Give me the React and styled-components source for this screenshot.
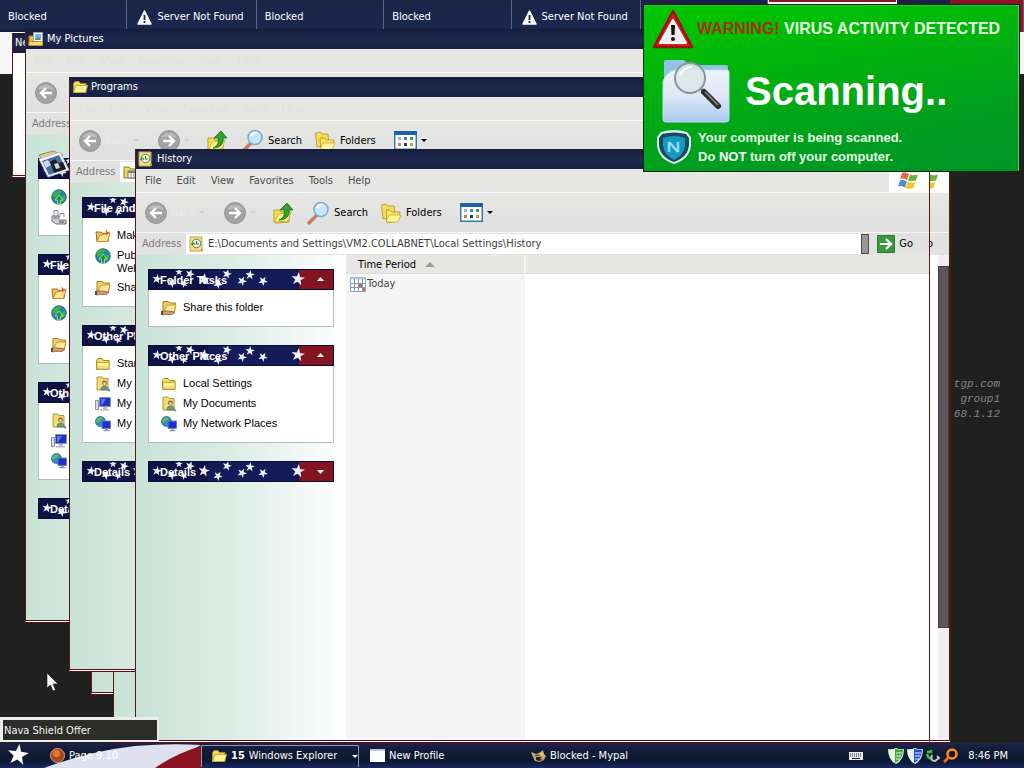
import React, { useId } from "react";
import styled, { createGlobalStyle } from "styled-components";

const ui = `"DejaVu Sans Condensed", "DejaVu Sans", sans-serif`;
const arial = `"Liberation Sans", Arial, sans-serif`;

const GlobalStyle = createGlobalStyle`
  * { box-sizing: border-box; }
  body { margin: 0; background: #202020; font: 11px/14px ${ui}; }
  button, input { font: inherit; color: inherit; border: 0; padding: 0; margin: 0; background: none; }
  svg { display: block; flex: none; }
`;

/* ---------- desktop ---------- */
const Desktop = styled.main`
  position: relative;
  display: flex;
  flex-direction: column;
  height: 100vh;
  overflow: hidden;
  background: #202020;
`;
const TabStrip = styled.nav`
  display: flex;
  flex: none;
  height: 32px;
  background: linear-gradient(#1a2246, #1d284f 85%, #141a38);
`;
const Tab = styled.button`
  flex: 1 1 0;
  display: flex;
  align-items: center;
  gap: 5px;
  height: 100%;
  padding: 2px 8px 0;
  color: #fff;
  white-space: nowrap;
  border-right: 1px solid #5c6486;
  ${(p) => p.$icon && "padding-left: 10px;"}
  ${(p) => p.$red && "background: linear-gradient(90deg, #1a2246 42%, #8c1420 42%);"}
  ${(p) => p.$active && "background: #8c1420; border: solid #fff; border-width: 0 1px 30px;"}
`;
const PageBand = styled.div`
  flex: none;
  height: 42px;
  background: #f6f6f6;
`;
const HostInfo = styled.div`
  position: absolute;
  top: 377px;
  right: 24px;
  color: #85857f;
  font: italic 11px/15px "Liberation Mono", monospace;
  text-align: right;
`;
const Pointer = styled.div`
  position: absolute;
  left: 46px;
  bottom: 76px;
`;

/* ---------- explorer windows ---------- */
const Frame = styled.section`
  position: absolute;
  left: ${(p) => p.$l}px;
  top: ${(p) => p.$t}px;
  right: ${(p) => p.$r}px;
  bottom: ${(p) => p.$b}px;
  display: flex;
  flex-direction: column;
  overflow: hidden;
  background: #fff;
  border: 1px solid #5c1616;
  border-top: 0;
  border-bottom: 3px double #5e0d14;
`;
const SideFrame = styled(Frame)`
  border-right: 2px solid #43200f;
`;
const TitleBar = styled.header`
  flex: none;
  display: flex;
  align-items: center;
  gap: 3px;
  height: 20px;
  padding-left: 2px;
  color: #fff;
  background: linear-gradient(#161d3d, #202a50 50%, #171f41);
`;
const Title = styled.h2`
  margin: 0;
  font: 11px/14px ${ui};
`;
const MenuBar = styled.div`
  flex: none;
  display: flex;
  align-items: center;
  gap: 15px;
  height: 24px;
  padding-left: 9px;
  color: ${(p) => (p.$faded ? "#e1e1e0" : "#4a4a4a")};
  background: #e6e6e5;
  border-bottom: 1px solid #fafafa;
`;
const LogoBox = styled.div`
  align-self: stretch;
  display: flex;
  align-items: center;
  justify-content: center;
  width: 40px;
  margin-left: auto;
  background: #fff;
`;
const ToolBar = styled.div`
  flex: none;
  display: flex;
  align-items: center;
  height: 40px;
  padding-left: 9px;
  background: linear-gradient(#e7e7e6, #dfdfdf);
  border-bottom: 1px solid #f8f8f8;
`;
const ToolButton = styled.button`
  display: flex;
  align-items: center;
  gap: 4px;
  margin-right: ${(p) => p.$gap || 0}px;
  color: ${(p) => (p.$faded ? "#ebebeb" : "#000")};
`;
const AddressBar = styled.div`
  flex: none;
  display: flex;
  align-items: center;
  height: 22px;
  padding: 0 16px 0 6px;
  background: #e2e2e1;
`;
const AddressLabel = styled.label`
  width: 44px;
  color: #7c7c7c;
`;
const AddressBox = styled.div`
  flex: 1;
  display: flex;
  align-items: center;
  gap: 3px;
  height: 20px;
  padding-left: 3px;
  background: #fff;
`;
const AddressInput = styled.input`
  flex: 1;
  min-width: 0;
  color: #3c3c3c;
`;
const DropButton = styled.button`
  width: 8px;
  height: 20px;
  background: #969696;
  border: 1px solid #4e4e4e;
`;
const GoButton = styled.button`
  display: flex;
  align-items: center;
  gap: 4px;
  margin-left: 8px;
`;
const Body = styled.div`
  flex: 1;
  display: flex;
  min-height: 0;
`;
const TaskPane = styled.aside`
  flex: none;
  display: flex;
  flex-direction: column;
  gap: 18px;
  width: 210px;
  padding: ${(p) => p.$top || 14}px 12px;
  font-family: ${arial};
  background: linear-gradient(90deg, #c9e2d8, #dcece5 45%, #fff);
`;
const GroupHead = styled.button`
  position: relative;
  display: block;
  width: 100%;
  height: 21px;
  padding-left: 12px;
  color: #fff;
  font-weight: bold;
  text-align: left;
`;
const HeadArt = styled.svg`
  position: absolute;
  inset: 0;
`;
const HeadText = styled.span`
  position: relative;
`;
const PictureBadge = styled.div`
  position: absolute;
  left: 0;
  bottom: 0;
`;
const GroupBody = styled.ul`
  margin: 0;
  padding: 8px 12px 8px 12px;
  list-style: none;
  background: #fff;
  border: solid #b5bdb9;
  border-width: 0 1px 1px;
`;
const TaskItem = styled.li`
  display: flex;
  gap: 6px;
  min-height: 20px;
  padding: 2px 0;
  line-height: 13px;
`;
const TaskLink = styled.a`
  padding: 1px 0;
  color: #000;
  text-decoration: none;
`;
const ListTable = styled.table`
  flex: 1;
  align-self: stretch;
  height: 100%;
  border-collapse: collapse;
  th { height: 18px; padding: 2px 0 0 12px; font-weight: normal; text-align: left; background: #e7e7e6; border-bottom: 1px solid #dcdcdc; }
  th:first-child { width: 179px; border-right: 2px solid #f4f4f4; }
  td { padding: 2px 4px; vertical-align: top; color: #444; }
  td:first-child { background: #f4f4f4; }
`;
const Inline = styled.span`
  display: flex;
  align-items: center;
  gap: ${(p) => p.$gap}px;
`;
const Scroll = styled.div`
  display: flex;
  flex-direction: column;
  width: 11px;
  margin-left: auto;
  padding: 11px 0 112px;
  background: #f0eef0;
`;
const Thumb = styled.div`
  flex: 1;
  background: #59575a;
  border: 1px solid #3f3d40;
`;

/* ---------- warning banner ---------- */
const Banner = styled.section`
  position: absolute;
  top: 4px;
  right: 4px;
  display: flex;
  flex-direction: column;
  width: 377px;
  height: 168px;
  padding: 2px 8px;
  color: #e4ffe0;
  font: bold 13px/19px ${arial};
  background: linear-gradient(170deg, #00c800, #00b40c 35%, #009a24 80%, #009626);
  border: 1px solid #06280a;
  box-shadow: inset -1px 0 #5ccc62, inset 0 1px #2fbf3a;
`;
const BannerRow = styled.div`
  display: flex;
  align-items: center;
  gap: ${(p) => p.$gap}px;
  padding-left: ${(p) => p.$pad || 0}px;
  height: ${(p) => p.$h}px;
`;
const BannerTitle = styled.h1`
  margin: 0;
  font: bold 16px/20px ${arial};
  white-space: nowrap;
`;
const Alert = styled.span`
  color: #a03400;
`;
const Scanning = styled.strong`
  color: #fff;
  font: bold 40px/48px ${arial};
`;
const BannerText = styled.p`
  margin: 0;
`;
const Strong = styled.b`
  font-weight: 900;
  color: #fff;
`;

/* ---------- taskbar ---------- */
const Tooltip = styled.div`
  position: absolute;
  left: 0;
  bottom: 26px;
  width: 159px;
  padding: 4px 1px 2px;
  color: #f4f4f4;
  background: #2c2c29;
  border: 3px solid #ececec;
  border-width: 3px 2px 2px 3px;
`;
const Taskbar = styled.footer`
  position: relative;
  display: flex;
  align-items: center;
  flex: none;
  height: 25px;
  margin-top: auto;
  color: #fff;
  background: linear-gradient(#1c2448, #121c38 30%, #0c1830 70%, #1b2a62);
`;
const StartArea = styled.div`
  position: relative;
  display: flex;
  align-items: center;
  width: 201px;
  height: 100%;
  padding-left: 50px;
`;
const FlagArt = styled.svg`
  position: absolute;
  inset: 0;
`;
const StartItem = styled.button`
  position: relative;
  display: flex;
  align-items: center;
  gap: 4px;
`;
const TaskButton = styled.button`
  display: flex;
  align-items: center;
  gap: 4px;
  width: ${(p) => p.$w}px;
  height: 22px;
  padding-left: ${(p) => (p.$group ? 9 : 11)}px;
  ${(p) => p.$group && "border: solid #8d93ad; border-width: 1px 1px 0;"}
`;
const Push = styled.span`
  margin-left: auto;
`;
const Tray = styled.div`
  display: flex;
  align-items: center;
  gap: 3px;
  margin-left: auto;
  padding-right: 16px;
`;
const Clock = styled.time`
  margin-left: 7px;
`;
const KeyboardSlot = styled.span`
  margin-right: 22px;
`;

/* ---------- icons ---------- */
const starPoints = (cx, cy, r, turn = 0) =>
  Array.from({ length: 10 }, (_, i) => {
    const a = ((i * 36 - 90 + turn) * Math.PI) / 180;
    const d = i % 2 ? r * 0.4 : r;
    return `${(cx + d * Math.cos(a)).toFixed(1)},${(cy + d * Math.sin(a)).toFixed(1)}`;
  }).join(" ");

const stars = [
  [9, 10, 5, 10], [24, 14, 5, 30], [31, 3, 4, 0], [36, 15, 4, 50], [42, 5, 5, 20],
  [56, 10, 6, 10], [70, 15, 5, 30], [79, 5, 5, 15], [94, 12, 5, 25], [102, 6, 5, 5],
  [115, 12, 5, 30], [150, 10, 7, 8],
];

const Folder = ({ open }) => (
  <svg width="16" height="16" viewBox="0 0 16 16">
    <path d="M1.500 4.500 3 2.500h4l1.500 2h5.500v9H1.500z" fill="#f1dc62" stroke="#a68a24" />
    <path d={open ? "M1.500 13.500 4 6.500h11.500l-2 7z" : "M2 6.500h12v6.500H2z"} fill="#fff29a" stroke="#c7a934" />
    {!open && <path d="M3 11h10" stroke="#e8cf52" />}
  </svg>
);
const NewFolder = () => (
  <svg width="16" height="16" viewBox="0 0 16 16">
    <path d="M1 4h5l2 1.500h6l-1 8H2z" fill="#efc75a" stroke="#986a1e" />
    <path d="M2 13.500 5 7l10-2-2.500 8.500z" fill="#ffe58c" stroke="#c08b2a" />
    <path d="m11 1 1 2.500 3 .5-2.500 1.500L12 8l-1.500-2.500z" fill="#e05a28" />
  </svg>
);
const ShareFolder = () => (
  <svg width="16" height="16" viewBox="0 0 16 16">
    <path d="M2 1.500h5l2 1.500h5.500l-1 9H2z" fill="#f3cf62" stroke="#a87e28" />
    <path d="m3 11 3-6h9l-2 7z" fill="#ffe99c" stroke="#c8983a" />
    <path d="M1 11h5l5 .5 3 1-3 2H5l-4 .5z" fill="#d99a6a" stroke="#8f5b32" strokeWidth=".7" />
    <path d="M0 11h2v4H0z" fill="#5a4a44" />
  </svg>
);
const Globe = () => (
  <svg width="16" height="16" viewBox="0 0 16 16">
    <circle cx="8" cy="8" r="7.300" fill="#2482ae" stroke="#1c5a70" strokeWidth=".8" />
    <path d="M3 3c3-2 6-2 8 0l-3 2-2 3-4 1C1 6 2 4 3 3zM9 8l5-2c1 3 0 5-2 7l-3-2z" fill="#34b04c" />
    <path d="m8 6 4 5H9.500v4h-3v-4H4z" fill="#1f8f38" stroke="#c2f0c0" strokeWidth=".7" />
  </svg>
);
const UserDocs = () => (
  <svg width="16" height="16" viewBox="0 0 16 16">
    <path d="M2 1h5l1 1.500h5V14H2z" fill="#f0dc74" stroke="#b29a3c" />
    <circle cx="9.500" cy="7" r="2.400" fill="#8a6748" />
    <circle cx="9.500" cy="7.600" r="1.500" fill="#f1c49c" />
    <path d="M6 14c0-3 1.500-4 3.500-4s3.500 1 4.500 4z" fill="#6b9a78" stroke="#40704e" strokeWidth=".6" />
    <path d="m12 13 3 2" stroke="#6d8db0" strokeWidth="2" />
  </svg>
);
const Computer = () => (
  <svg width="16" height="16" viewBox="0 0 16 16">
    <path d="M.5 4.500h3v9h-3z" fill="#dcdce0" stroke="#777" strokeWidth=".8" />
    <path d="M4.500 1.500h11v9h-11z" fill="#1f35c2" stroke="#8c92b0" />
    <path d="M6 3h5L7 9H6z" fill="#5878f2" />
    <path d="M8 11h4v2h2v1.500H5V13h3z" fill="#b9bcc8" />
  </svg>
);
const Network = () => (
  <svg width="16" height="16" viewBox="0 0 16 16">
    <circle cx="5.500" cy="5.500" r="5" fill="#3088c6" stroke="#1a5a88" strokeWidth=".7" />
    <path d="M2 2.500c2-1.500 5-1.500 6 0L5 5 2 7C1 5 1 4 2 2.500z" fill="#4fc45c" />
    <path d="M7 5h8.500v7.500H7z" fill="#1c2fcf" stroke="#6f80b6" />
    <path d="M10 12.500h3V14h1.500v1.300h-6V14H10z" fill="#8e99b8" />
  </svg>
);
const History = () => (
  <svg width="16" height="16" viewBox="0 0 16 16">
    <path d="M1 1h12v14H1z" fill="#f4df82" stroke="#c4a648" />
    <circle cx="7.500" cy="7.500" r="4.300" fill="#eef6ea" stroke="#667a4c" />
    <path d="M7.500 5v3h2.500M4 7l-1.500 2M4 7l2 1.500" fill="none" stroke="#3a7a34" strokeWidth="1.200" />
    <path d="M12 13h2v2h-2z" fill="#c49d30" />
  </svg>
);
const PicturesFolder = () => (
  <svg width="16" height="16" viewBox="0 0 16 16">
    <path d="M1 5h4l1 1h8v8.500H1z" fill="#f0b84a" stroke="#b3781c" />
    <path d="M5.500 1.500h9v9h-9z" fill="#fff" stroke="#8aa6c4" />
    <path d="M7 3h6v6H7z" fill="#79b6ea" />
    <path d="m7 9 3-3 3 3z" fill="#5f8a5a" />
    <path d="M1 10.500h13.500v4H1z" fill="#ffd679" stroke="#c98f2c" />
  </svg>
);
const ProgramsFolder = () => (
  <svg width="16" height="16" viewBox="0 0 16 16">
    <path d="M1 3h5l2 2h7v9H1z" fill="#e9d967" stroke="#8d7d20" />
    <path d="M5 7h10v7H5z" fill="#fff" stroke="#777" />
    <path d="M5 7h10v2H5z" fill="#6d8a54" /><path d="M8 9v5m3-5v5" stroke="#888" />
  </svg>
);
const Printer = () => (
  <svg width="16" height="16" viewBox="0 0 16 16">
    <path d="M3 7V1.500h4V7M9 8V4.500h4V8" fill="#fff" stroke="#888" />
    <path d="M1 7h7v4h7v4H5l-4-3z" fill="#c9ccd0" stroke="#6e7378" />
    <path d="M3 9h3m2 4h5" stroke="#4e5358" />
  </svg>
);
const Arrow = ({ flip }) => (
  <svg width="22" height="22" viewBox="0 0 22 22">
    <circle cx="11" cy="11" r="10.500" fill="#a3a3a3" stroke="#959595" />
    <path d="M3 8a9 9 0 0 1 16 0c-5-2-11-2-16 0z" fill="#bcbcbc" />
    <path d={flip ? "M5 11h11M11 6l5 5-5 5" : "M17 11H6m5-5-5 5 5 5"} fill="none" stroke="#fff" strokeWidth="2.400" />
  </svg>
);
const UpFolder = () => (
  <svg width="22" height="22" viewBox="0 0 22 22">
    <path d="M2 8h5l2 2h8v10l-13 1-2-1z" fill="#f2e24e" stroke="#b49c24" />
    <path d="m3 20 3-8 13-2-3 9z" fill="#fff382" stroke="#d0b636" />
    <path d="M7 18c5-2 6-6 5-10H8l7-7 6 7h-4c1 6-3 10-10 10z" fill="#2ea32e" stroke="#166a1a" strokeWidth=".8" />
  </svg>
);
const SearchIcon = () => (
  <svg width="24" height="24" viewBox="0 0 24 24">
    <path d="m11 14-8 8" stroke="#c67b66" strokeWidth="3.500" strokeLinecap="round" />
    <circle cx="15" cy="8.500" r="7" fill="#c5e8fa" stroke="#7fa8cc" strokeWidth="1.500" />
    <path d="M11 7c1-3 4-4 6-3" fill="none" stroke="#fff" strokeWidth="2" />
  </svg>
);
const FoldersIcon = () => (
  <svg width="22" height="22" viewBox="0 0 22 22">
    <path d="M1.500 3 6 2l2 2h6l1 11-12 2z" fill="#f4de5a" stroke="#c5a12e" />
    <path d="M6 8h4l2 2h8l-2 9-11 2z" fill="#f7e56a" stroke="#c5a12e" />
    <path d="m6 20 3-7h12l-3 7z" fill="#fff59c" stroke="#d8b83e" />
  </svg>
);
const ViewsIcon = () => (
  <svg width="23" height="19" viewBox="0 0 23 19">
    <path d="M.75.75h21.500v17.500H.75z" fill="#fff" stroke="#3a79ae" strokeWidth="1.500" />
    <path d="M0 0h23v4H0z" fill="#1c62a4" />
    <path d="M4 6h3v3H4z" fill="#b4a3b8" /><path d="M10 6h3v3h-3z" fill="#4a7cc4" /><path d="M16 6h3v3h-3z" fill="#3f9a58" />
    <path d="M4 12h3v3H4z" fill="#cc7c50" /><path d="M10 12h3v3h-3z" fill="#183c8c" /><path d="M16 12h3v3h-3z" fill="#b4a54a" />
  </svg>
);
const Caret = ({ color = "#000", up, big }) => (
  <svg width={big ? 10 : 6} height={big ? 5 : 3} viewBox="0 0 6 3">
    <path d={up ? "M0 3h6L3 0z" : "M0 0h6L3 3z"} fill={color} />
  </svg>
);
const WinLogo = () => (
  <svg width="22" height="20" viewBox="0 0 22 20">
    <path d="M4 2c3-1 5 0 7 1l-2 6c-2-1-4-2-7-1z" fill="#e86a3c" />
    <path d="M12 3.500c3 1 5 1 8 0l-2 6c-3 1-5 1-8 0z" fill="#6fb43a" />
    <path d="M2 9.500c3-1 5 0 7 1l-2 6c-2-1-4-2-7-1z" fill="#4a90d8" />
    <path d="M9.500 11c3 1 5 1 8 0l-2 6c-3 1-5 1-8 0z" fill="#f4c62c" />
  </svg>
);
const GoIcon = () => (
  <svg width="18" height="18" viewBox="0 0 18 18">
    <path d="M.5.5h17v17H.5z" fill="#3a9a3c" stroke="#2a7c30" />
    <path d="M3 9h11M9 4l5 5-5 5" fill="none" stroke="#fff" strokeWidth="2.200" />
  </svg>
);
const Calendar = () => (
  <svg width="16" height="16" viewBox="0 0 16 16">
    <path d="M.5 1.500h15v14H.5z" fill="#fff" stroke="#8aa4c4" />
    <path d="M.5 1.500h15v2H.5z" fill="#b4c6dc" />
    <path d="M4.500 3v12m4-12v12m4-12v12M1 7.500h14M1 11.500h14" stroke="#7c9abf" />
    <path d="M9 8h3v3H9zM13 12h2v3h-2z" fill="#d8623e" />
  </svg>
);
const PhotoStack = () => (
  <svg width="31" height="30" viewBox="0 0 31 30">
    <path d="m1 6 14-4 10 4-18 8z" fill="#d8d08c" stroke="#8e8e62" />
    <path d="m1 10 21-7 9 18-21 7z" fill="#f4f6fa" stroke="#b6bcc8" />
    <path d="m4 12 17-6 7 14-17 6z" fill="#4c6ea4" />
    <path d="m12 13 5-3 3 4 5-1 3 7-12 4z" fill="#1c222c" />
    <path d="m5 13 5-2 3 5-5 3zM16 15l4-1 2 5-4 1z" fill="#c9d8ec" />
  </svg>
);
const WarnGlyph = () => (
  <svg width="15" height="15" viewBox="0 0 15 15">
    <path d="M7.500 1 14 14H1z" fill="#fff" stroke="#fff" strokeWidth="1.500" strokeLinejoin="round" />
    <path d="M7.500 5v5M7.500 11v2" stroke="#1c2448" strokeWidth="1.800" />
  </svg>
);
const WarnSign = () => (
  <svg width="42" height="42" viewBox="0 0 42 42">
    <path d="M21 3 40 39H2z" fill="#d8201c" stroke="#a01010" strokeWidth="2.500" strokeLinejoin="round" />
    <path d="M21 12 34 35H8z" fill="#ececec" stroke="#fff" strokeWidth="2" strokeLinejoin="round" />
    <path d="M19 17h4l-.5 10h-3z" fill="#111" /><circle cx="21" cy="31" r="2" fill="#111" />
  </svg>
);
const ScanFolder = () => (
  <svg width="68" height="64" viewBox="0 0 68 64">
    <defs>
      <linearGradient id="scan-front" x1="0" y1="0" x2="0" y2="1">
        <stop offset="0" stopColor="#eef3fb" /><stop offset=".5" stopColor="#dfe8f8" /><stop offset="1" stopColor="#a9c8ee" />
      </linearGradient>
    </defs>
    <path d="M2 3q0-2 2-2h18l5 5h37q2 0 2 2v20H2z" fill="#90c4e0" />
    <path d="M1 22q4-9 12-11h52q2 0 2 2v47q0 3-3 3H4q-3 0-3-3z" fill="url(#scan-front)" stroke="#c4daf4" />
    <circle cx="28" cy="19" r="15" fill="#d9e6ea" fillOpacity=".8" stroke="#8d9494" strokeWidth="2" />
    <path d="M18 16q3-8 12-8" fill="none" stroke="#fff" strokeWidth="2" />
    <path d="m39 30 4 4" stroke="#8a8a8a" strokeWidth="3" />
    <path d="m42 33 14 14" stroke="#2e2e2e" strokeWidth="6" strokeLinecap="round" />
    <path d="m43 33 13 13" stroke="#8a8a8a" strokeWidth="1.500" />
  </svg>
);
const NavaShield = () => (
  <svg width="36" height="36" viewBox="0 0 36 36">
    <path d="M5 3q13-4 26 0l4 5v8q-1 14-17 19Q2 30 1 16V8z" fill="#dfeef0" />
    <path d="M6 5q12-3 24 0l3 4v7q-1 12-15 17Q4 28 3 16V9z" fill="#164d5c" />
    <path d="M7 9q11-4 22 0v8q-1 9-11 14Q8 26 7 17z" fill="#1599c0" />
    <path d="M13 23V13m0 0 9 10m0 0V13" fill="none" stroke="#8fe0f2" strokeWidth="2.500" />
  </svg>
);
const Ball = () => (
  <svg width="15" height="15" viewBox="0 0 15 15">
    <circle cx="7.500" cy="7.500" r="7" fill="#a8461a" stroke="#e0a078" />
    <circle cx="6.500" cy="5.500" r="3.500" fill="#e07a34" />
  </svg>
);
const BlankPage = () => (
  <svg width="15" height="13" viewBox="0 0 15 13">
    <path d="M0 0h15v13H0z" fill="#fff" /><path d="M0 0h15v2H0z" fill="#b9c8e4" />
  </svg>
);
const MypalIcon = () => (
  <svg width="15" height="14" viewBox="0 0 15 14">
    <path d="m0 3 5 2 3-1 4-3 1 4 2 2-2 4-4 2-5-1-2-4z" fill="#c2a878" />
    <path d="M5 8h6l-2 2 3 1-4 1-3-1z" fill="#2c2418" /><circle cx="11" cy="5" r="1.500" fill="#f0d040" />
    <path d="m4 7 3-1 2 1" fill="none" stroke="#2c2418" />
  </svg>
);
const Keyboard = () => (
  <svg width="14" height="9" viewBox="0 0 14 9">
    <path d="M0 1h14v8H0z" fill="#e8e8e8" />
    <path d="M1 3h12M1 5h12" stroke="#222" strokeDasharray="1 1" /><path d="M3 7.500h8" stroke="#222" />
  </svg>
);
const TrayShield = ({ color }) => (
  <svg width="16" height="16" viewBox="0 0 16 16">
    <path d="M0 1q4 1 8-1 4 2 8 1 0 11-8 15Q0 12 0 1z" fill="#e9f6e6" />
    <path d="M7 1q5 1 8 1 0 9-8 13z" fill={color} />
    <path d="M8 5h6M8 8h5M8 11h4" stroke="#e9f6e6" />
  </svg>
);
const Plug = () => (
  <svg width="14" height="14" viewBox="0 0 14 14">
    <path d="M1 3h4V1M1 5q1 5 5 4" fill="none" stroke="#35c43a" strokeWidth="2.500" />
    <path d="M6 6q-2 6 3 6l4-3-2-2" fill="none" stroke="#c2c6c2" strokeWidth="2" />
  </svg>
);
const OrangeLens = () => (
  <svg width="15" height="15" viewBox="0 0 15 15">
    <circle cx="9" cy="6" r="4.500" fill="none" stroke="#ff8a1c" strokeWidth="2.600" />
    <path d="m6 9-5 5" stroke="#f07010" strokeWidth="2.800" />
  </svg>
);

/* ---------- parts ---------- */
const icons = {
  share: ShareFolder, make: NewFolder, web: Globe, folder: Folder,
  docs: UserDocs, computer: Computer, network: Network, printer: Printer,
};

function TaskGroup({ title, items, collapsed, badge }) {
  return (
    <div>
      <GroupHead aria-label={title}>
        <HeadArt width="100%" height="21" viewBox="0 0 186 21">
          <path d="M0 0h186v21H0z" fill="#0e1244" />
          <path d="M60 0h90v21H60z" fill="#141b58" />
          <path d="M151 0h35v21h-35z" fill="#82151f" />
          {stars.map(([x, y, r, t]) => (
            <polygon key={x} points={starPoints(x, y, r, t)} fill="#eef0fa" />
          ))}
          <path d={collapsed ? "M169 9h7l-3.500 4z" : "M169 12h7l-3.500-4z"} fill="#fff" />
          <path d="M.5.5h185v20H.5z" fill="none" stroke="#0a0d33" />
        </HeadArt>
        {badge ? <PictureBadge><PhotoStack /></PictureBadge> : <HeadText>{title}</HeadText>}
      </GroupHead>
      {!collapsed && (
        <GroupBody>
          {items.map(([icon, label]) => {
            const Icon = icons[icon];
            return (
              <TaskItem key={label}>
                <Icon />
                <TaskLink href="#">{label}</TaskLink>
              </TaskItem>
            );
          })}
        </GroupBody>
      )}
    </div>
  );
}

const menus = ["File", "Edit", "View", "Favorites", "Tools", "Help"];

function Explorer({ title, icon: Icon, path, addressIcon: AddressIcon, box, faded, groups, paneTop, frame: Shell = Frame, children }) {
  const id = useId();
  const [l, t, r, b] = box;
  return (
    <Shell $l={l} $t={t} $r={r} $b={b}>
      <TitleBar><Icon open /><Title>{title}</Title></TitleBar>
      <MenuBar $faded={faded}>
        {menus.map((m) => <button key={m}>{m}</button>)}
        <LogoBox><WinLogo /></LogoBox>
      </MenuBar>
      <ToolBar>
        <ToolButton $faded $gap={19}><Arrow />Back<Caret color="#cfcfcf" /></ToolButton>
        <ToolButton $faded $gap={16}><Arrow flip /><Caret color="#cfcfcf" /></ToolButton>
        <ToolButton aria-label="Up" $gap={12}><UpFolder /></ToolButton>
        <ToolButton $gap={12}><SearchIcon />Search</ToolButton>
        <ToolButton $gap={18}><FoldersIcon />Folders</ToolButton>
        <ToolButton aria-label="Views"><ViewsIcon /><Caret /></ToolButton>
      </ToolBar>
      <AddressBar>
        <AddressLabel htmlFor={id}>Address</AddressLabel>
        <AddressBox>
          <AddressIcon />
          <AddressInput id={id} defaultValue={path} />
        </AddressBox>
        <DropButton aria-label="Show addresses" />
        <GoButton><GoIcon />Go</GoButton>
      </AddressBar>
      <Body>
        <TaskPane $top={paneTop}>
          {groups.map((g) => <TaskGroup key={g.title} {...g} />)}
        </TaskPane>
        {children}
      </Body>
    </Shell>
  );
}

const details = { title: "Details", collapsed: true };
const fileTasks = {
  title: "File and Folder Tasks",
  items: [["make", "Make a new folder"], ["web", "Publish this folder to the Web"], ["share", "Share this folder"]],
};
const pictureGroups = [
  { title: "Picture Tasks", badge: true, items: [["web", "Order prints online"], ["printer", "Print pictures"]] },
  fileTasks,
  { title: "Other Places", items: [["docs", "My Documents"], ["computer", "My Computer"], ["network", "My Network Places"]] },
  details,
];
const programGroups = [
  fileTasks,
  { title: "Other Places", items: [["folder", "Start Menu"], ["docs", "My Documents"], ["computer", "My Computer"], ["network", "My Network Places"]] },
  details,
];
const historyGroups = [
  { title: "Folder Tasks", items: [["share", "Share this folder"]] },
  { title: "Other Places", items: [["folder", "Local Settings"], ["docs", "My Documents"], ["network", "My Network Places"]] },
  details,
];
const tabs = [
  { label: "Blocked" }, { label: "Server Not Found", warn: true }, { label: "Blocked" }, { label: "Blocked" },
  { label: "Server Not Found", warn: true }, {}, { active: true }, { red: true },
];

export default function App() {
  return (
    <Desktop>
      <GlobalStyle />
      <TabStrip>
        {tabs.map((t, i) => (
          <Tab key={i} $icon={t.warn} $red={t.red} $active={t.active} aria-label={t.label || "Tab"}>
            {t.warn && <WarnGlyph />}
            {t.label}
          </Tab>
        ))}
      </TabStrip>
      <PageBand />
      <HostInfo>tgp.com<br />group1<br />68.1.12</HostInfo>

      <Frame $l={12} $t={33} $r={120} $b={590}>
        <TitleBar><Title>New Profile</Title></TitleBar>
      </Frame>
      <Frame $l={91} $t={420} $r={120} $b={73}>
        <Body><TaskPane /></Body>
      </Frame>
      <Explorer frame={SideFrame} title="History" icon={History} addressIcon={History} path="" box={[113, 149, 73, 25]} groups={[]}>
        <Scroll><Thumb /></Scroll>
      </Explorer>
      <Explorer title="My Pictures" icon={PicturesFolder} addressIcon={PicturesFolder} path="" box={[25, 29, 120, 145]} faded paneTop={23} groups={pictureGroups} />
      <Explorer title="Programs" icon={Folder} addressIcon={ProgramsFolder} path="" box={[69, 77, 120, 96]} faded groups={programGroups} />
      <Explorer
        title="History"
        icon={History}
        addressIcon={History}
        path="E:\Documents and Settings\VM2.COLLABNET\Local Settings\History"
        box={[135, 149, 94, 25]}
        groups={historyGroups}
      >
        <ListTable>
          <thead>
            <tr><th><Inline $gap={9}>Time Period<Caret up big color="#9c9c9c" /></Inline></th><th /></tr>
          </thead>
          <tbody>
            <tr><td><Inline $gap={1}><Calendar />Today</Inline></td><td /></tr>
          </tbody>
        </ListTable>
      </Explorer>

      <Banner>
        <BannerRow $h={44} $gap={3}>
          <WarnSign />
          <BannerTitle><Alert>WARNING!</Alert> VIRUS ACTIVITY DETECTED</BannerTitle>
        </BannerRow>
        <BannerRow $h={80} $gap={15} $pad={10}>
          <ScanFolder />
          <Scanning>Scanning..</Scanning>
        </BannerRow>
        <BannerRow $h={32} $gap={6} $pad={4}>
          <NavaShield />
          <BannerText>Your computer is being scanned.<br />Do <Strong>NOT</Strong> turn off your computer.</BannerText>
        </BannerRow>
      </Banner>

      <Pointer>
        <svg width="14" height="20" viewBox="0 0 14 20">
          <path d="M1 1v15l3.500-3 2.500 6 2.500-1-2.500-6h5z" fill="#fff" stroke="#111" strokeWidth=".6" />
        </svg>
      </Pointer>

      <Taskbar>
        <StartArea>
          <FlagArt width="201" height="25" viewBox="0 0 201 25">
            <path d="M44 25Q90 8 135 3q36-3 66-1L160 25z" fill="#dfe0ee" />
            <path d="M155 25q20-14 46-22v22z" fill="#8c1420" />
            <polygon points={starPoints(18, 12, 11, 8)} fill="#fff" />
          </FlagArt>
          <StartItem><Ball />Page 9.10</StartItem>
        </StartArea>
        <TaskButton $w={158} $group>
          <Folder open /><b>15</b> Windows Explorer<Push><Caret color="#fff" /></Push>
        </TaskButton>
        <TaskButton $w={161}><BlankPage />New Profile</TaskButton>
        <TaskButton $w={161}><MypalIcon />Blocked - Mypal</TaskButton>
        <Tray>
          <KeyboardSlot><Keyboard /></KeyboardSlot>
          <TrayShield color="#3cab34" />
          <TrayShield color="#2450d8" />
          <Plug />
          <OrangeLens />
          <Clock>8:46 PM</Clock>
        </Tray>
      </Taskbar>
      <Tooltip role="tooltip">Nava Shield Offer</Tooltip>
    </Desktop>
  );
}
